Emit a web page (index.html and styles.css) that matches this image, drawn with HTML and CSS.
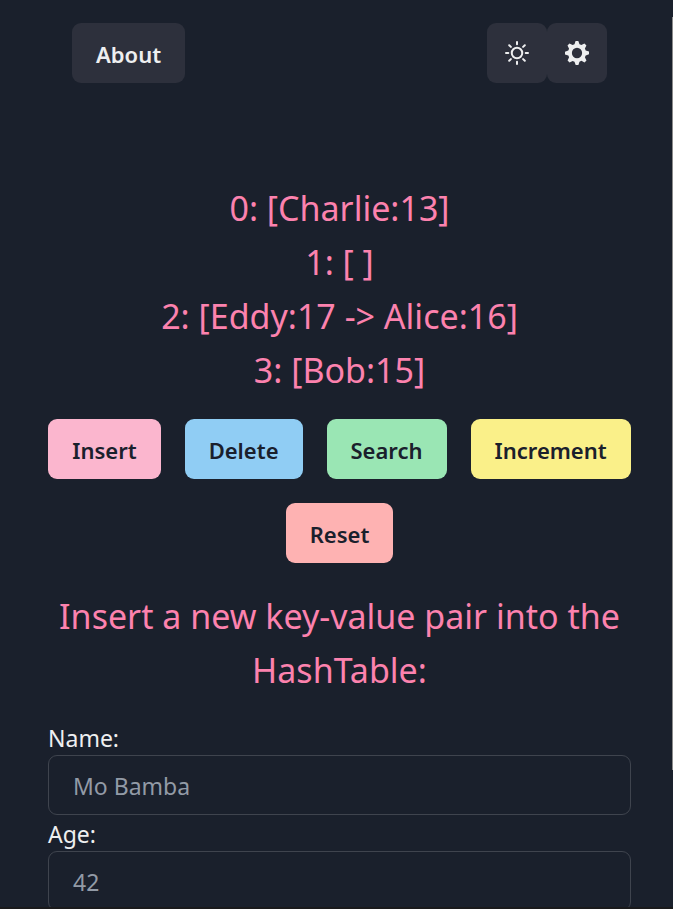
FILE: index.html
```html
<!DOCTYPE html>
<html lang="en">
<head>
<meta charset="utf-8">
<meta name="viewport" content="width=device-width, initial-scale=1">
<title>HashTable</title>
<link rel="stylesheet" href="styles.css">
</head>
<body>
<div class="app">
  <nav class="nav">
    <button class="btn btn-ghost" type="button">About</button>
    <div class="nav-tools">
      <button class="btn btn-ghost btn-icon" type="button" aria-label="Toggle theme">
        <svg class="icon" viewBox="0 0 24 24" fill="none" stroke="currentColor" stroke-width="2" stroke-linecap="round" aria-hidden="true">
          <circle cx="12" cy="12" r="5.250"/>
          <path d="M12 1v2.300M12 20.700v2.300M1 12h2.300M20.700 12h2.300M4.200 4.200l1.700 1.700M18.100 18.100l1.700 1.700M4.200 19.800l1.700-1.700M18.100 5.900l1.700-1.700"/>
        </svg>
      </button>
      <button class="btn btn-ghost btn-icon" type="button" aria-label="Settings">
        <svg class="icon" viewBox="0 0 14 14" fill="currentColor" fill-rule="evenodd" aria-hidden="true">
          <path d="M14 7.770V6.170L12.060 5.530 11.610 4.440 12.490 2.600 11.360 1.470 9.550 2.380 8.460 1.930 7.770 0H6.170L5.540 1.950 4.430 2.400 2.590 1.520 1.460 2.650 2.370 4.460 1.920 5.550 0 6.230V7.820L1.940 8.460 2.390 9.550 1.510 11.390 2.640 12.520 4.450 11.610 5.540 12.060 6.230 13.980H7.820L8.450 12.040 9.560 11.590 11.400 12.470 12.530 11.340 11.610 9.530 12.080 8.440ZM7 10a3 3 0 1 1 0-6 3 3 0 0 1 0 6Z"/>
        </svg>
      </button>
    </div>
  </nav>
  <main class="main">
    <div class="display">
      <p>0: [Charlie:13]</p>
      <p>1: [ ]</p>
      <p>2: [Eddy:17 -&gt; Alice:16]</p>
      <p>3: [Bob:15]</p>
    </div>
    <div class="actions">
      <button class="btn btn-pink" type="button">Insert</button>
      <button class="btn btn-blue" type="button">Delete</button>
      <button class="btn btn-green" type="button">Search</button>
      <button class="btn btn-yellow" type="button">Increment</button>
      <button class="btn btn-red" type="button">Reset</button>
    </div>
    <p class="display">Insert a new key-value pair into the HashTable:</p>
    <form class="form">
      <label for="name">Name:</label>
      <input id="name" type="text" placeholder="Mo Bamba">
      <label for="age">Age:</label>
      <input id="age" type="text" placeholder="42">
    </form>
  </main>
  <div class="scroll-thumb"></div>
  <div class="bottom-edge"></div>
</div>
</body>
</html>
```
FILE: styles.css
```css
* {
  box-sizing: border-box;
}

body {
  margin: 0;
  background: #1a202c;
  color: #eeeff0;
  font: 23px/34px "Segoe UI", "Noto Sans", sans-serif;
}

.app {
  position: relative;
  height: 100vh;
  overflow: hidden;
  padding: 23px 42px 0 48px;
}

.nav {
  display: flex;
  justify-content: space-between;
  padding: 0 24px;
}

.nav-tools {
  display: flex;
}

.main {
  display: flex;
  flex-direction: column;
  gap: 22px;
  padding-top: 96px;
}

.display {
  margin: 0;
  padding-top: 2px;
  color: #fc82ae;
  font-size: 34px;
  line-height: 54px;
  text-align: center;
}

.display p {
  margin: 0;
}

.actions {
  display: flex;
  flex-wrap: wrap;
  justify-content: center;
  gap: 24px;
  padding-bottom: 2px;
}

.btn {
  height: 60px;
  padding: 2px 24px 0;
  border: 0;
  border-radius: 9px;
  color: #1a202c;
  font: inherit;
  font-size: 22px;
  font-weight: 600;
}

.btn-ghost {
  background: #2d303c;
  color: #eeeff0;
}

.btn-icon {
  display: flex;
  align-items: center;
  justify-content: center;
  width: 60px;
  padding: 0;
}

.icon {
  width: 24px;
  height: 24px;
}

.btn-pink { background: #fbb6ce; }
.btn-blue { background: #90cdf4; }
.btn-green { background: #9ae6b4; }
.btn-yellow { background: #faf089; }
.btn-red { background: #feb2b2; }

.form {
  display: flex;
  flex-direction: column;
}

.form label {
  padding-top: 2px;
}

.form input {
  width: 100%;
  height: 60px;
  padding: 2px 24px 0;
  border: 1px solid #3f444e;
  border-radius: 9px;
  background: transparent;
  color: inherit;
  font: inherit;
}

.form input::placeholder {
  color: #929aa6;
  opacity: 1;
}

.scroll-thumb {
  position: absolute;
  top: 17px;
  right: 0;
  width: 1px;
  height: 753px;
  background: #8b8b8b;
}

.bottom-edge {
  position: absolute;
  right: 0;
  bottom: 0;
  left: 0;
  height: 2px;
  background: #1a1a1c;
}
```
